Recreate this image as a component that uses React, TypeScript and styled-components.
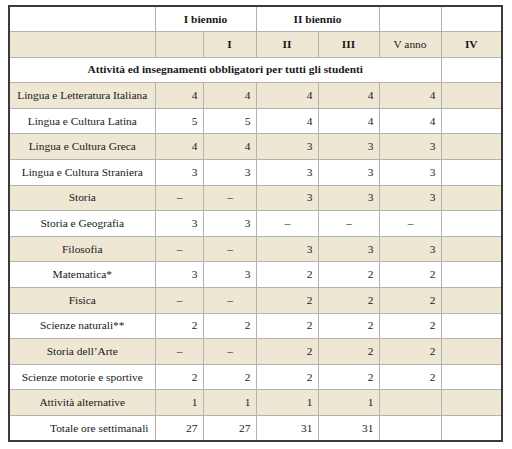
import React from 'react';
import styled, { createGlobalStyle } from 'styled-components';

const GlobalStyle = createGlobalStyle`
  html, body {
    margin: 0;
    padding: 0;
    background: #ffffff;
  }
  body {
    font-family: 'Liberation Serif', 'DejaVu Serif', serif;
    color: #1a1a1a;
  }
`;

type Row = {
    name: string;
    values: string[];
    shaded: boolean;
    alignName?: 'center' | 'right';
};

const rows: Row[] = [
    { name: 'Lingua e Letteratura Italiana', values: ['4', '4', '4', '4', '4', ''], shaded: true },
    { name: 'Lingua e Cultura Latina', values: ['5', '5', '4', '4', '4', ''], shaded: false },
    { name: 'Lingua e Cultura Greca', values: ['4', '4', '3', '3', '3', ''], shaded: true },
    { name: 'Lingua e Cultura Straniera', values: ['3', '3', '3', '3', '3', ''], shaded: false },
    { name: 'Storia', values: ['–', '–', '3', '3', '3', ''], shaded: true },
    { name: 'Storia e Geografia', values: ['3', '3', '–', '–', '–', ''], shaded: false },
    { name: 'Filosofia', values: ['–', '–', '3', '3', '3', ''], shaded: true },
    { name: 'Matematica*', values: ['3', '3', '2', '2', '2', ''], shaded: false },
    { name: 'Fisica', values: ['–', '–', '2', '2', '2', ''], shaded: true },
    { name: 'Scienze naturali**', values: ['2', '2', '2', '2', '2', ''], shaded: false },
    { name: 'Storia dell’Arte', values: ['–', '–', '2', '2', '2', ''], shaded: true },
    { name: 'Scienze motorie e sportive', values: ['2', '2', '2', '2', '2', ''], shaded: false },
    { name: 'Attività alternative', values: ['1', '1', '1', '1', '', ''], shaded: true },
    { name: 'Totale ore settimanali', values: ['27', '27', '31', '31', '', ''], shaded: false, alignName: 'right' },
];

const App = () => {
    return (
        <Page>
            <GlobalStyle/>
            <Caption>
                quadro orario (<Link>piano degli studi</Link>)
            </Caption>
            <Table>
                <colgroup>
                    <col style={{ width: 146 }}/>
                    <col style={{ width: 48 }}/>
                    <col style={{ width: 53 }}/>
                    <col style={{ width: 62 }}/>
                    <col style={{ width: 61 }}/>
                    <col style={{ width: 62 }}/>
                    <col style={{ width: 61 }}/>
                </colgroup>
                <tbody>
                    <Tr>
                        <Cell/>
                        <Head colSpan={2}>I biennio</Head>
                        <Head colSpan={2}>II biennio</Head>
                        <Cell/>
                        <Cell/>
                    </Tr>
                    <Tr $shaded>
                        <Cell/>
                        <Cell/>
                        <Head>I</Head>
                        <Head>II</Head>
                        <Head>III</Head>
                        <Head $light>V anno</Head>
                        <Head>IV</Head>
                    </Tr>
                    <Tr>
                        <Head colSpan={6}>Attività ed insegnamenti obbligatori per tutti gli studenti</Head>
                        <Cell/>
                    </Tr>
                    {rows.map((row) => (
                        <Tr key={row.name} $shaded={row.shaded}>
                            <Subject $align={row.alignName ?? 'center'}>{row.name}</Subject>
                            {row.values.map((v, i) => (
                                <Value key={i} $dash={v === '–'}>{v}</Value>
                            ))}
                        </Tr>
                    ))}
                </tbody>
            </Table>
        </Page>
    );
};

const Page = styled.div`
  padding: 0 0 0 8px;
  width: 512px;
  height: 449px;
  box-sizing: border-box;
  overflow: hidden;
  font-family: 'Liberation Serif', 'DejaVu Serif', serif;
`;

const Caption = styled.p`
  margin: -12px 0 0;
  height: 17px;
  font-size: 11px;
  line-height: 13px;
  padding-left: 205px;
  white-space: nowrap;
  color: #222;
`;

const Link = styled.span`
  color: #3366cc;
`;

const Table = styled.table`
  border-collapse: collapse;
  table-layout: fixed;
  width: 494px;
  border: 2px solid #3a3a3a;
  font-family: 'Liberation Serif', 'DejaVu Serif', serif;
  font-size: 11.4px;
  line-height: 13px;
  color: #1a1a1a;
`;

const Tr = styled.tr<{ $shaded?: boolean }>`
  height: 25.6px;
  background: ${(p) => (p.$shaded ? '#ede7d4' : '#ffffff')};
`;

const Cell = styled.td`
  border: 1px solid #b3b3b3;
  padding: 0 6px;
`;

const Head = styled(Cell)<{ $light?: boolean }>`
  text-align: center;
  font-weight: ${(p) => (p.$light ? 400 : 700)};
`;

const Subject = styled(Cell)<{ $align: 'center' | 'right' }>`
  text-align: ${(p) => p.$align};
  white-space: nowrap;
`;

const Value = styled(Cell)<{ $dash: boolean }>`
  text-align: ${(p) => (p.$dash ? 'center' : 'right')};
  padding-right: 5px;
`;

export default App;
